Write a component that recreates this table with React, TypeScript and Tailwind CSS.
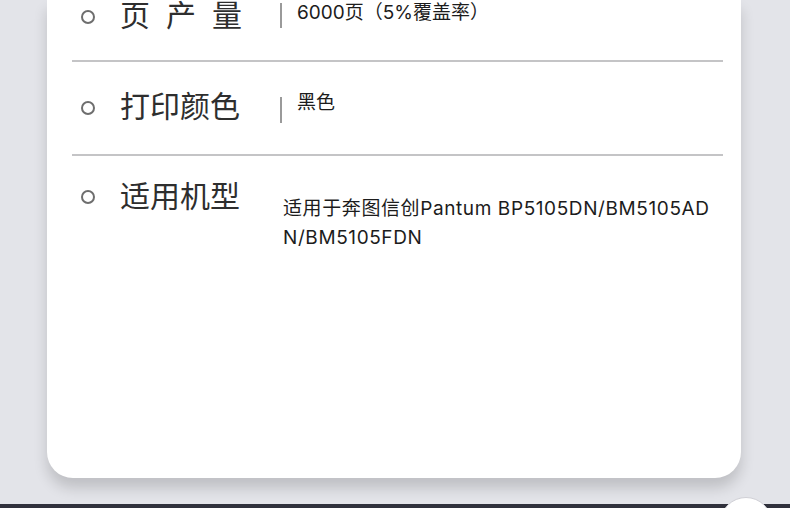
const cjk = { fontFamily: '"Inter", "Noto Sans CJK SC", sans-serif' };

const Dot = ({ top }: { top: string }) => (
  <span className={`ml-[9px] ${top} h-[14px] w-[14px] shrink-0 rounded-full border-2 border-[#6e6e6e]`} />
);

const Bar = ({ top, h }: { top: string; h: string }) => (
  <span className={`ml-[38px] ${top} ${h} w-[2px] shrink-0 bg-[#9a9a9a]`} />
);

export default function App() {
  return (
    <div className="relative flex h-[508px] w-[790px] flex-col overflow-hidden bg-[#e3e4e9]" style={cjk}>
      <div className="ml-[47px] h-[478px] w-[694px] shrink-0 rounded-b-[26px] bg-white pl-[25px] pr-[18px] shadow-[0_10px_14px_rgba(0,0,0,0.16)]">
        {/* 页产量 */}
        <div className="flex h-[60px] items-start">
          <Dot top="mt-[10px]" />
          <div className="ml-[25px] flex w-[122px] justify-between text-[30px] leading-[30px] text-[#2e2e2e]">
            <span>页</span>
            <span>产</span>
            <span>量</span>
          </div>
          <Bar top="mt-[3px]" h="h-[25px]" />
          <span className="ml-[15px] text-[19px] leading-[26px] text-[#1c1c1c]">6000页（5%覆盖率）</span>
        </div>
        <div className="h-[2px] bg-[#c4c4c6]" />

        {/* 打印颜色 */}
        <div className="flex h-[92px] items-start pt-[29px]">
          <Dot top="mt-[10px]" />
          <div className="ml-[25px] w-[122px] whitespace-nowrap text-[30px] leading-[30px] text-[#2e2e2e]">打印颜色</div>
          <Bar top="mt-[6px]" h="h-[26px]" />
          <span className="ml-[15px] -mt-[1px] text-[19px] leading-[26px] text-[#1c1c1c]">黑色</span>
        </div>
        <div className="h-[2px] bg-[#c4c4c6]" />

        {/* 适用机型 */}
        <div className="flex items-start pt-[25px]">
          <Dot top="mt-[9px]" />
          <div className="ml-[25px] w-[122px] whitespace-nowrap text-[30px] leading-[30px] text-[#2e2e2e]">适用机型</div>
          <p className="ml-[41px] mt-[13px] w-[434px] break-all text-[19px] leading-[29px] tracking-[0.6px] text-[#1c1c1c]">
            适用于奔图信创Pantum BP5105DN/BM5105ADN/BM5105FDN
          </p>
        </div>
      </div>
      <div className="mt-auto h-[4px] bg-[#30313c]" />
      <div className="absolute left-[720px] top-[497px] h-[52px] w-[52px] rounded-full border border-[#d0d0d6] bg-white" />
    </div>
  );
}
